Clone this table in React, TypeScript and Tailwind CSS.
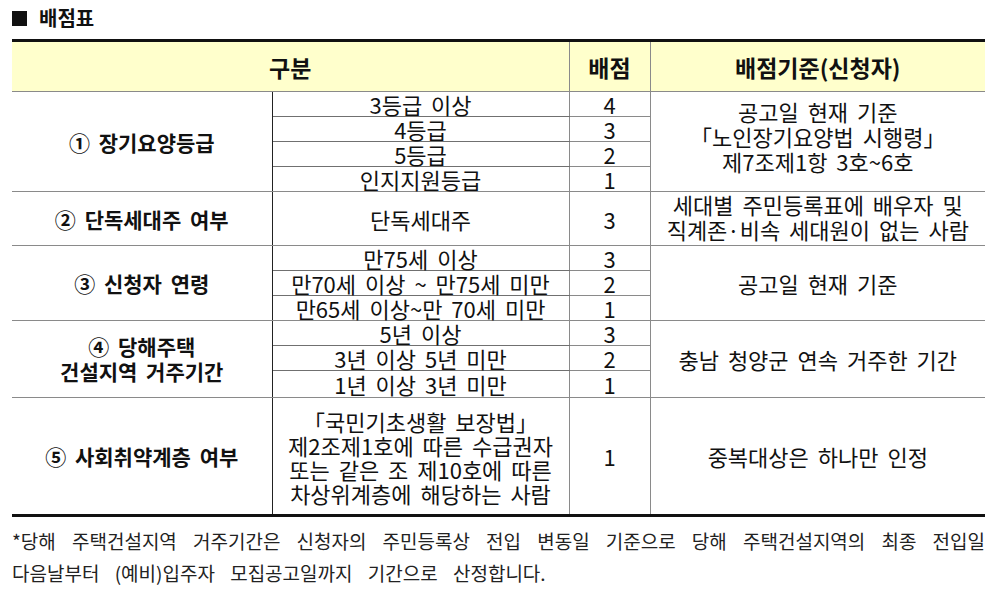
import React from "react";

const F = { fontFamily: '"Noto Sans CJK KR", "Noto Sans", sans-serif' };

function App() {
  const sub = "border-b border-[#707070]";
  const sc = "border-b border-l border-[#8a8a8a]";
  const g1 = "border-b border-[#8a8a8a] border-r border-r-[#222] font-bold text-[21px]";
  return (
    <div className="w-[1007px] h-[596px] bg-white text-[#111] pl-[12px] pt-[5px] [word-spacing:4px]" style={F}>
      <div className="flex items-center gap-[12px] h-[26px] text-[20px] font-bold">
        <span className="inline-block w-[15px] h-[15px] bg-[#111]"></span>
        <span>배점표</span>
      </div>
      <table className="mt-[8px] w-[973px] table-fixed border-collapse border-t-[3px] border-t-[#111] border-b-[3px] border-b-[#111] text-[22px] leading-[24px]">
        <colgroup>
          <col className="w-[260px]" />
          <col className="w-[297px]" />
          <col className="w-[81px]" />
          <col className="w-[335px]" />
        </colgroup>
        <thead>
          <tr className="bg-[#ffffcc] h-[51px] font-bold text-[23px]">
            <th colSpan={2} className="border-b border-[#8a8a8a] font-bold">구분</th>
            <th className="border-b border-l border-[#8a8a8a] font-bold">배점</th>
            <th className="border-b border-l border-[#8a8a8a] font-bold">배점기준(신청자)</th>
          </tr>
        </thead>
        <tbody className="text-center">
          <tr className="h-[25px]">
            <td rowSpan={4} className={g1}>① 장기요양등급</td>
            <td className={sub}>3등급 이상</td>
            <td className={sc}>4</td>
            <td rowSpan={4} className="border-b border-l border-[#8a8a8a] leading-[25px] pb-[10px]">
              공고일 현재 기준<br />「노인장기요양법 시행령」<br />제7조제1항 3호~6호
            </td>
          </tr>
          <tr className="h-[25px]">
            <td className={sub}>4등급</td>
            <td className={sc}>3</td>
          </tr>
          <tr className="h-[25px]">
            <td className={sub}>5등급</td>
            <td className={sc}>2</td>
          </tr>
          <tr className="h-[25px]">
            <td className="border-b border-[#8a8a8a]">인지지원등급</td>
            <td className={sc}>1</td>
          </tr>
          <tr className="h-[52px]">
            <td className={g1}>② 단독세대주 여부</td>
            <td className="border-b border-[#8a8a8a]">단독세대주</td>
            <td className={sc}>3</td>
            <td className="border-b border-l border-[#8a8a8a] leading-[25px] pb-[3px]">
              세대별 주민등록표에 배우자 및<br />직계존·비속 세대원이 없는 사람
            </td>
          </tr>
          <tr className="h-[25px]">
            <td rowSpan={3} className={g1}>③ 신청자 연령</td>
            <td className={sub}>만75세 이상</td>
            <td className={sc}>3</td>
            <td rowSpan={3} className="border-b border-l border-[#8a8a8a]">공고일 현재 기준</td>
          </tr>
          <tr className="h-[25px]">
            <td className={sub}>만70세 이상 ~ 만75세 미만</td>
            <td className={sc}>2</td>
          </tr>
          <tr className="h-[25px]">
            <td className="border-b border-[#8a8a8a]">만65세 이상~만 70세 미만</td>
            <td className={sc}>1</td>
          </tr>
          <tr className="h-[25px]">
            <td rowSpan={3} className={g1 + " leading-[25px]"}>
              ④ 당해주택<br />건설지역 거주기간
            </td>
            <td className={sub}>5년 이상</td>
            <td className={sc}>3</td>
            <td rowSpan={3} className="border-b border-l border-[#8a8a8a]">충남 청양군 연속 거주한 기간</td>
          </tr>
          <tr className="h-[25px]">
            <td className={sub}>3년 이상 5년 미만</td>
            <td className={sc}>2</td>
          </tr>
          <tr className="h-[27px]">
            <td className="border-b border-[#8a8a8a]">1년 이상 3년 미만</td>
            <td className={sc}>1</td>
          </tr>
          <tr className="h-[118px]">
            <td className="border-r border-r-[#222] font-bold text-[21px]">⑤ 사회취약계층 여부</td>
            <td className="leading-[24px] pt-[2px]">
              「국민기초생활 보장법」<br />제2조제1호에 따른 수급권자<br />또는 같은 조 제10호에 따른<br />차상위계층에 해당하는 사람
            </td>
            <td className="border-l border-[#8a8a8a]">1</td>
            <td className="border-l border-[#8a8a8a]">중복대상은 하나만 인정</td>
          </tr>
        </tbody>
      </table>
      <div className="mt-[8px] w-[973px] text-[19px] leading-[32px] text-[#222] [word-spacing:11px]">
        <p className="text-justify [text-align-last:justify]">
          *당해 주택건설지역 거주기간은 신청자의 주민등록상 전입 변동일 기준으로 당해 주택건설지역의 최종 전입일
        </p>
        <p>다음날부터 (예비)입주자 모집공고일까지 기간으로 산정합니다.</p>
      </div>
    </div>
  );
}

export default App;
